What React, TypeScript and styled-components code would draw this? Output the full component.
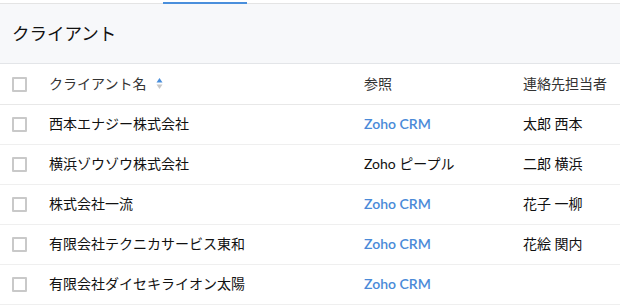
import React from 'react';
import styled, { createGlobalStyle } from 'styled-components';

const GlobalStyle = createGlobalStyle`
  html, body {
    margin: 0;
    padding: 0;
    background: #ffffff;
    font-family: Lato, "Noto Sans CJK JP", sans-serif;
  }
`;

type Client = {
  name: string;
  ref: string;
  linked: boolean;
  contact: string;
};

const clients: Client[] = [
  { name: '西本エナジー株式会社', ref: 'Zoho CRM', linked: true, contact: '太郎 西本' },
  { name: '横浜ゾウゾウ株式会社', ref: 'Zoho ピープル', linked: false, contact: '二郎 横浜' },
  { name: '株式会社一流', ref: 'Zoho CRM', linked: true, contact: '花子 一柳' },
  { name: '有限会社テクニカサービス東和', ref: 'Zoho CRM', linked: true, contact: '花絵 関内' },
  { name: '有限会社ダイセキライオン太陽', ref: 'Zoho CRM', linked: true, contact: '' },
];

const Page = styled.div`
  width: 620px;
  height: 308px;
  overflow: hidden;
  background: #fff;
`;

const TabBar = styled.div`
  display: flex;
  height: 3px;
  border-bottom: 1px solid #e4e4e4;
`;

const ActiveTab = styled.div`
  margin-left: 163px;
  width: 84px;
  height: 2px;
  margin-top: 2px;
  background: #4a8fdc;
`;

const TitleBar = styled.div`
  display: flex;
  align-items: center;
  box-sizing: border-box;
  height: 60px;
  padding: 1px 12px 0;
  background: #f7f8fa;
  border-bottom: 1px solid #e3e5e8;
`;

const Title = styled.h1`
  margin: 0;
  font-size: 17.5px;
  line-height: 20px;
  font-weight: 400;
  color: #111;
`;

const Row = styled.div<{ $head?: boolean }>`
  display: grid;
  grid-template-columns: 49px 315px 159px 1fr;
  align-items: center;
  height: ${(p) => (p.$head ? 40 : 39)}px;
  border-bottom: 1px solid ${(p) => (p.$head ? '#e8e8e8' : '#efefef')};
  font-size: 14px;
  line-height: 18px;
  color: ${(p) => (p.$head ? '#333' : '#111')};
  white-space: nowrap;
`;

const CheckCell = styled.div`
  display: flex;
  padding-left: 12px;
`;

const Checkbox = styled.span`
  box-sizing: border-box;
  width: 15px;
  height: 15px;
  border: 2px solid #c9c9c9;
  border-radius: 1px;
  background: #fff;
`;

const Cell = styled.div`
  display: flex;
  align-items: center;
  gap: 10px;
  padding-bottom: 1px;
`;

const RefText = styled.span<{ $linked: boolean }>`
  color: ${(p) => (p.$linked ? '#4a8ad8' : '#111')};
  font-weight: ${(p) => (p.$linked ? 600 : 400)};
`;

const SortIcon = () => (
  <svg width="7" height="13" viewBox="0 0 7 13">
    <path d="M3.5 1 L6.5 5.5 L0.5 5.5 Z" fill="#4a8fdc" />
    <path d="M3.5 12 L6.5 7.5 L0.5 7.5 Z" fill="#c8c8c8" />
  </svg>
);

export default function App() {
  return (
    <Page>
      <GlobalStyle />
      <TabBar>
        <ActiveTab />
      </TabBar>
      <TitleBar>
        <Title>クライアント</Title>
      </TitleBar>
      <Row $head>
        <CheckCell>
          <Checkbox />
        </CheckCell>
        <Cell>
          クライアント名
          <SortIcon />
        </Cell>
        <Cell>参照</Cell>
        <Cell>連絡先担当者</Cell>
      </Row>
      {clients.map((c) => (
        <Row key={c.name}>
          <CheckCell>
            <Checkbox />
          </CheckCell>
          <Cell>{c.name}</Cell>
          <Cell>
            <RefText $linked={c.linked}>{c.ref}</RefText>
          </Cell>
          <Cell>{c.contact}</Cell>
        </Row>
      ))}
    </Page>
  );
}
